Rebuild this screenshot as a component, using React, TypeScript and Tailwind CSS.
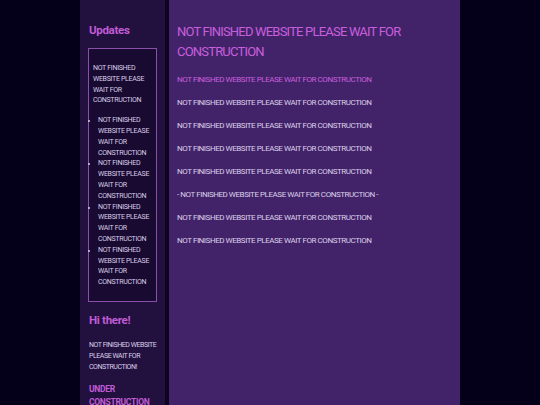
import React from "react";

const MSG = "NOT FINISHED WEBSITE PLEASE WAIT FOR CONSTRUCTION";

export default function App() {
  const font = { fontFamily: 'Roboto, "Open Sans", Lato, sans-serif' };
  return (
    <div className="w-[540px] h-[405px] bg-[#05001a] flex overflow-hidden" style={font}>
      <div className="w-[80px] shrink-0" />
      <aside className="w-[85px] shrink-0 bg-[#22113f] px-[8px] pt-[22px] text-[#d9cde9]">
        <h2 className="text-[11.5px] font-bold text-[#c15bd6] leading-[16px] pl-[1px] tracking-[-0.3px]">Updates</h2>
        <div className="mt-[10px] border border-[#8a4fa8] bg-[#180a30] h-[254px] px-[4px] pt-[14px] text-[7px] leading-[10.8px] tracking-[-0.3px]">
          <p>NOT FINISHED WEBSITE PLEASE WAIT FOR CONSTRUCTION</p>
          <ul className="mt-[9px] list-disc pl-[5px] marker:text-[5px]">
            <li>NOT FINISHED WEBSITE PLEASE WAIT FOR CONSTRUCTION</li>
            <li>NOT FINISHED WEBSITE PLEASE WAIT FOR CONSTRUCTION</li>
            <li>NOT FINISHED WEBSITE PLEASE WAIT FOR CONSTRUCTION</li>
            <li>NOT FINISHED WEBSITE PLEASE WAIT FOR CONSTRUCTION</li>
          </ul>
        </div>
        <h2 className="mt-[10px] text-[11.5px] font-bold text-[#c15bd6] leading-[16px] pl-[1px] tracking-[-0.3px]">Hi there!</h2>
        <p className="mt-[12px] text-[7px] leading-[10.8px] pl-[1px] tracking-[-0.45px]">NOT FINISHED WEBSITE PLEASE WAIT FOR CONSTRUCTION!</p>
        <p className="mt-[11px] text-[8.5px] font-bold leading-[13px] text-[#c15bd6] pl-[1px] tracking-[-0.3px]">UNDER CONSTRUCTION</p>
      </aside>
      <div className="w-[4px] shrink-0 bg-[#0c0420]" />
      <main className="w-[291px] shrink-0 bg-[#42236a] px-[8px] pt-[22px] text-[#dccfe9]">
        <h1 className="text-[13px] leading-[20px] text-[#c85fdc] tracking-[-0.8px]">{MSG}</h1>
        <div className="mt-[6px] text-[8px] leading-[23px] tracking-[-0.45px]">
          <p className="text-[#c85fdc]">{MSG}</p>
          <p>{MSG}</p>
          <p>{MSG}</p>
          <p>{MSG}</p>
          <p>{MSG}</p>
          <p>- {MSG} -</p>
          <p>{MSG}</p>
          <p>{MSG}</p>
        </div>
      </main>
    </div>
  );
}
